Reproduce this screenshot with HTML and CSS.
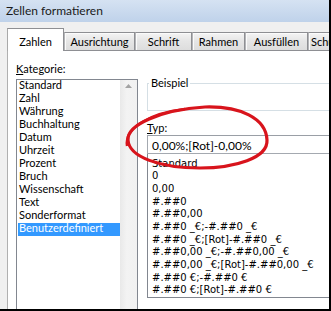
FILE: index.html
```html
<!DOCTYPE html>
<html lang="de">
<head>
<meta charset="utf-8">
<title>Zellen formatieren</title>
<link rel="stylesheet" href="styles.css">
</head>
<body>
<div class="window">
  <div class="titlebar">Zellen formatieren</div>
  <div class="client">
    <div class="tabs">
      <div class="tab tab-zahlen active">Zahlen</div>
      <div class="tab tab-ausrichtung">Ausrichtung</div>
      <div class="tab tab-schrift">Schrift</div>
      <div class="tab tab-rahmen">Rahmen</div>
      <div class="tab tab-ausfuellen">Ausfüllen</div>
      <div class="tab tab-schutz">Schutz</div>
    </div>
    <div class="panel">
      <div class="col-left">
        <div class="label"><u>K</u>ategorie:</div>
        <div class="listbox">
          <ul class="categories">
            <li>Standard</li>
            <li>Zahl</li>
            <li>Währung</li>
            <li>Buchhaltung</li>
            <li>Datum</li>
            <li>Uhrzeit</li>
            <li>Prozent</li>
            <li>Bruch</li>
            <li>Wissenschaft</li>
            <li>Text</li>
            <li>Sonderformat</li>
            <li class="selected">Benutzerdefiniert</li>
          </ul>
          <div class="scrollbar">
            <div class="scroll-btn">
              <svg class="arrow" width="7" height="4" viewBox="0 0 7 4"><path d="M0 4 L3.5 0 L7 4 Z" fill="#a3a3a3"/></svg>
            </div>
          </div>
        </div>
      </div>
      <div class="col-right">
        <fieldset class="group"><legend>Beispiel</legend></fieldset>
        <div class="label typ"><u>T</u>yp:</div>
        <div class="input">0,00%;[Rot]-0,00%</div>
        <ul class="types">
          <li>Standard</li>
          <li>0</li>
          <li>0,00</li>
          <li>#.##0</li>
          <li>#.##0,00</li>
          <li>#.##0 _€;-#.##0 _€</li>
          <li>#.##0 _€;[Rot]-#.##0 _€</li>
          <li>#.##0,00 _€;-#.##0,00 _€</li>
          <li>#.##0,00 _€;[Rot]-#.##0,00 _€</li>
          <li>#.##0 €;-#.##0 €</li>
          <li>#.##0 €;[Rot]-#.##0 €</li>
        </ul>
      </div>
    </div>
  </div>
  <svg class="annotation" width="331" height="311" viewBox="0 0 331 311">
    <path d="M128,140 C127,125 160,110 205,107 C240,106 266,118 267,140 C268,158 235,168 200,168 C160,168 129,157 128,140 Z" fill="none" stroke="#d8141c" stroke-width="3.2"/>
    <path d="M127,146 C124,128 150,113 185,109" fill="none" stroke="#d8141c" stroke-width="2.4"/>
  </svg>
</div>
</body>
</html>
```
FILE: styles.css
```css
html, body {
  margin: 0;
  padding: 0;
}
body {
  width: 331px;
  height: 311px;
  overflow: hidden;
  background: #f0f0f0;
  font-family: Lato, "Open Sans", sans-serif;
  font-size: 11px;
  color: #000;
}
.window {
  position: relative;
  width: 331px;
  height: 311px;
  box-sizing: border-box;
  border-right: 2px solid #000;
  border-bottom: 2px solid #000;
  background: #f0f0f0;
  overflow: hidden;
  display: flex;
  flex-direction: column;
}
.titlebar {
  height: 22px;
  flex: none;
  line-height: 22px;
  padding-left: 6px;
  font-size: 12px;
  color: #1a1a1a;
  background: linear-gradient(#d5e2f2, #bfd2ea);
  border-bottom: 0;
}
.client {
  flex: 1;
  display: flex;
  flex-direction: column;
  padding: 6px 0 0 7px;
  min-height: 0;
}
.tabs {
  display: flex;
  align-items: flex-end;
  height: 22px;
  flex: none;
  position: relative;
  z-index: 1;
}
.tab {
  box-sizing: border-box;
  height: 18px;
  border: 1px solid #8e8f93;
  border-bottom: 0;
  border-left-color: #b4b5b8;
  padding-top: 1px;
  line-height: 16px;
  text-align: center;
  white-space: nowrap;
  overflow: hidden;
  background: linear-gradient(#f4f4f4, #e6e6e6 45%, #dddddd);
  box-shadow: inset 1px 1px 0 #fbfbfb;
  flex: none;
}
.tab.active {
  height: 23px;
  margin-bottom: -1px;
  padding-top: 5px;
  background: #fff;
  box-shadow: none;
  border-color: #8e8f93;
  border-left-color: #a9a9a9;
}
.tab-zahlen { width: 57px; }
.tab-ausrichtung { width: 71px; }
.tab-schrift { width: 57px; }
.tab-rahmen { width: 53px; }
.tab-ausfuellen { width: 63px; }
.tab-schutz { width: 60px; text-align: left; padding-left: 2px; }

.panel {
  flex: 1;
  min-height: 0;
  background: #fff;
  border-top: 1px solid #8e8f93;
  border-left: 1px solid #b0b0b0;
  display: grid;
  grid-template-columns: 122px 240px;
  column-gap: 9px;
  align-items: start;
  padding: 10px 0 0 8px;
  overflow: hidden;
}
.label {
  line-height: 15px;
  white-space: nowrap;
}
.label u {
  text-decoration-thickness: 1px;
  text-underline-offset: 1px;
}
.listbox {
  margin-top: 3px;
  height: 260px;
  box-sizing: border-box;
  border: 1px solid #828790;
  display: flex;
}
.categories {
  flex: 1;
  list-style: none;
  margin: 0;
  padding: 0 0 0 1px;
}
.categories li {
  line-height: 10px;
  padding: 0 0 3px 1px;
  white-space: nowrap;
}
.categories li.selected {
  background: #3399ff;
  color: #fff;
}
.scrollbar {
  width: 17px;
  flex: none;
  background: linear-gradient(to right, #e9e9e9, #f3f3f3 40%, #f1f1f1);
}
.scroll-btn {
  height: 17px;
  display: flex;
  justify-content: center;
  padding-top: 4px;
  box-sizing: border-box;
}
.arrow {
  display: block;
}
.col-right {
  display: flex;
  flex-direction: column;
  margin-top: 14px;
}
.group {
  box-sizing: border-box;
  height: 36px;
  margin: 0;
  padding: 0;
  border: 1px solid #d5dfe5;
  min-width: 0;
}
.group legend {
  margin-left: 1px;
  padding: 0 2px;
  line-height: 16px;
  font-size: 11px;
}
.typ {
  margin-top: 9px;
}
.input {
  box-sizing: border-box;
  height: 19px;
  border: 1px solid #a4a9b0;
  border-top-color: #9a9fa6;
  padding: 2px 0 0 4px;
  line-height: 15px;
  font-size: 12px;
  white-space: nowrap;
}
.types {
  list-style: none;
  margin: 0;
  border: 1px solid #828790;
  border-top: 0;
  padding: 3.5px 0 0 4px;
  font-family: "DejaVu Sans", sans-serif;
  font-size: 10px;
}
.types li {
  line-height: 12.7px;
  height: 12.7px;
  white-space: nowrap;
}
.annotation {
  position: absolute;
  left: 0;
  top: 0;
  pointer-events: none;
}
```
